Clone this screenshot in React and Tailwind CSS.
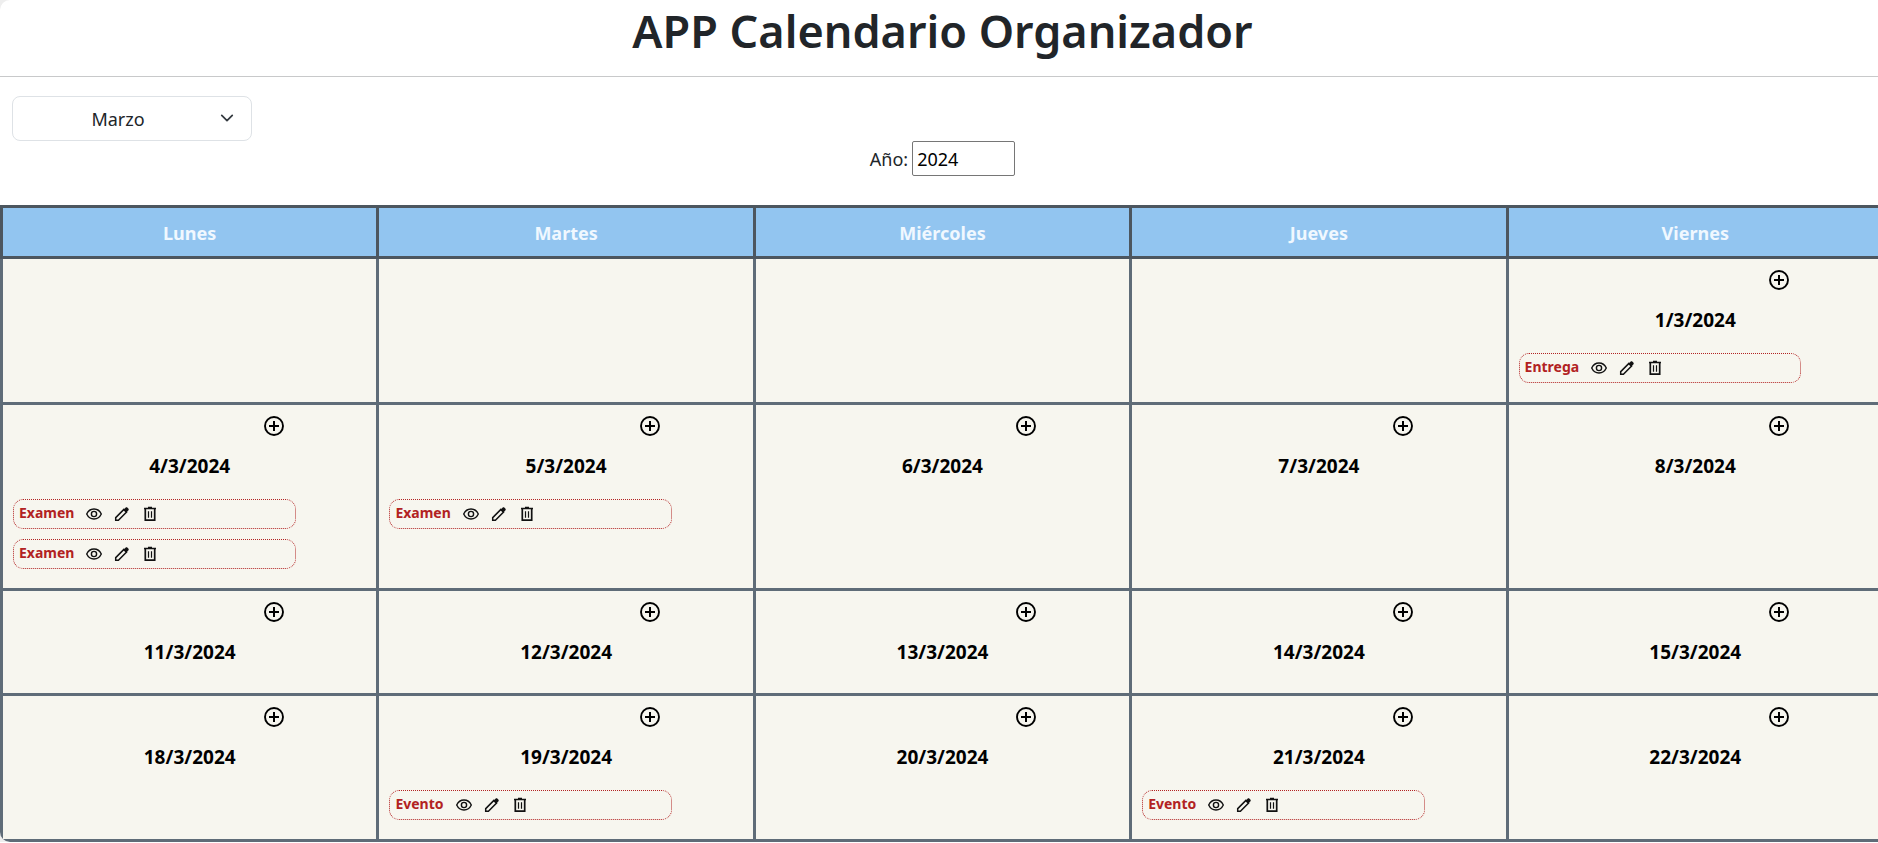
import { useState } from "react";

const DAYS = ["Lunes", "Martes", "Miércoles", "Jueves", "Viernes"];
const MONTHS = [
  "Enero", "Febrero", "Marzo", "Abril", "Mayo", "Junio",
  "Julio", "Agosto", "Septiembre", "Octubre", "Noviembre", "Diciembre",
];
const WEEKS = [
  [null, null, null, null, { day: 1, events: ["Entrega"] }],
  [{ day: 4, events: ["Examen", "Examen"] }, { day: 5, events: ["Examen"] }, { day: 6 }, { day: 7 }, { day: 8 }],
  [{ day: 11 }, { day: 12 }, { day: 13 }, { day: 14 }, { day: 15 }],
  [{ day: 18 }, { day: 19, events: ["Evento"] }, { day: 20 }, { day: 21, events: ["Evento"] }, { day: 22 }],
];

function PlusIcon() {
  return (
    <svg viewBox="0 0 20 20" className="size-5" fill="none" stroke="currentColor" aria-hidden="true">
      <circle cx="10" cy="10" r="9" strokeWidth="1.9" />
      <path d="M10 5v10M5 10h10" strokeWidth="2" />
    </svg>
  );
}

function EyeIcon() {
  return (
    <svg viewBox="0 0 16 16" className="size-4" fill="none" stroke="currentColor" strokeWidth="1.4" aria-hidden="true">
      <path d="M.7 8C2.200 4.800 4.800 3 8 3s5.800 1.800 7.300 5c-1.500 3.200-4.100 5-7.300 5S2.200 11.200.7 8Z" />
      <circle cx="8" cy="8" r="2.600" />
    </svg>
  );
}

function PencilIcon() {
  return (
    <svg viewBox="0 0 16 16" className="size-4" aria-hidden="true">
      <path d="M1.700 14.300v-2.700l8.200-8.200 2.700 2.700-8.200 8.200Z" fill="none" stroke="currentColor" strokeWidth="1.500" />
      <path d="m9.400 3.900 2.100-2.200c.6-.6 1.400-.6 2 0l.8.8c.6.6.6 1.400 0 2l-2.200 2.100Z" fill="currentColor" />
    </svg>
  );
}

function TrashIcon() {
  return (
    <svg viewBox="0 0 16 16" className="size-4" fill="none" stroke="currentColor" aria-hidden="true">
      <path d="M2 2.500h12M6 1.500h4" strokeWidth="1.500" />
      <path d="M3.300 3v11.200h9.400V3" strokeWidth="1.700" />
      <path d="M6.500 5.200v6.600M9.500 5.200v6.600" strokeWidth="1.200" />
    </svg>
  );
}

function EventRow({ name }) {
  return (
    <li className="flex h-[30px] w-4/5 items-center gap-3 rounded-[10px] border border-dotted border-[#b22222] px-[5px]">
      <span className="pb-[3px] text-sm leading-5 font-bold text-[#b22222]">{name}</span>
      <button type="button" aria-label="Ver"><EyeIcon /></button>
      <button type="button" aria-label="Editar"><PencilIcon /></button>
      <button type="button" aria-label="Borrar"><TrashIcon /></button>
    </li>
  );
}

function DayCell({ entry, month, year }) {
  return (
    <td className="border-[3px] border-[#5f6c78] bg-[#f7f6ef] px-[10px] pt-[7px] pb-[19px] align-top">
      {entry && (
        <>
          <div className="flex w-4/5 justify-end pr-2 text-black">
            <button type="button" aria-label="Agregar evento" className="p-1"><PlusIcon /></button>
          </div>
          <h2 className="mt-3 mb-2 text-center text-[19px] leading-7 font-bold text-black">
            {entry.day}/{month}/{year}
          </h2>
          {entry.events && (
            <ul className="mt-[19px] flex flex-col gap-[10px] text-[#111]">
              {entry.events.map((name, i) => <EventRow key={i} name={name} />)}
            </ul>
          )}
        </>
      )}
    </td>
  );
}

export default function App() {
  const [month, setMonth] = useState(3);
  const [year, setYear] = useState("2024");

  return (
    <div className="overflow-hidden bg-[#eeeeee] font-['Noto_Sans',sans-serif] text-lg text-[#212529]">
      <div className="w-[calc(100%+7px)] overflow-hidden rounded-l-[10px] bg-white">
        <h1 className="pb-[14px] text-center text-[45px] leading-[62px] font-semibold">APP Calendario Organizador</h1>
        <hr className="border-[#c8c9ca]" />
        <div className="px-3 pt-[19px]">
          <div className="relative w-60">
            <select
              aria-label="Mes"
              value={month}
              onChange={(e) => setMonth(Number(e.target.value))}
              className="h-[45px] w-full appearance-none rounded-lg border border-[#dee2e6] bg-white pr-10 pl-3 text-center"
            >
              {MONTHS.map((name, i) => <option key={name} value={i + 1}>{name}</option>)}
            </select>
            <svg viewBox="0 0 16 16" className="pointer-events-none absolute top-[15px] right-[18px] size-[14px]" fill="none" stroke="#343a40" strokeWidth="2" strokeLinecap="round" strokeLinejoin="round" aria-hidden="true">
              <path d="m2 5 6 6 6-6" />
            </svg>
          </div>
        </div>
        <div className="flex items-center justify-center gap-1 pb-[29px]">
          <label htmlFor="year">Año:</label>
          <input
            id="year"
            type="text"
            inputMode="numeric"
            value={year}
            onChange={(e) => setYear(e.target.value)}
            className="h-[35px] w-[103px] rounded-[2px] border border-[#767676] bg-white px-1 text-black"
          />
        </div>
        <table className="w-full table-fixed border-collapse">
          <thead>
            <tr>
              {DAYS.map((day) => (
                <th key={day} scope="col" className="h-[51px] border-[3px] border-[#4c565f] bg-[#92c5f0] pt-0.5 text-lg font-bold text-[#f0f8ff]">
                  {day}
                </th>
              ))}
            </tr>
          </thead>
          <tbody>
            {WEEKS.map((week, w) => (
              <tr key={w}>
                {week.map((entry, d) => <DayCell key={d} entry={entry} month={month} year={year} />)}
              </tr>
            ))}
          </tbody>
        </table>
      </div>
    </div>
  );
}
